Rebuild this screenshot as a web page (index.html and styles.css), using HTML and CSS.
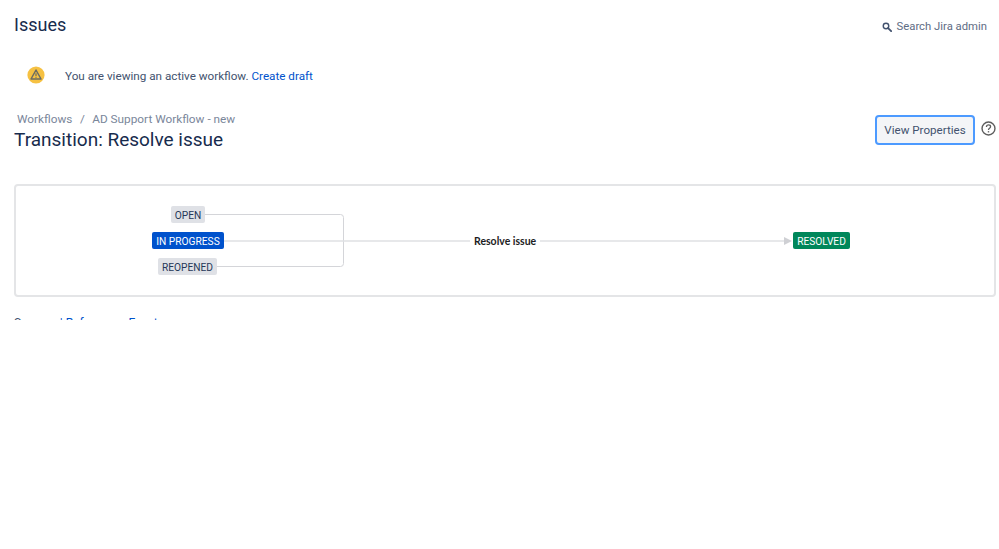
FILE: index.html
```html
<!DOCTYPE html>
<html lang="en">
<head>
<meta charset="utf-8">
<title>Transition: Resolve issue</title>
<link rel="stylesheet" href="styles.css">
</head>
<body>
<main class="page">
  <header class="topbar">
    <h1 class="product">Issues</h1>
    <a class="admin-search">
      <svg class="search-icon" viewBox="0 0 12 12" width="10" height="10"><circle cx="4.8" cy="4.8" r="3.3" fill="none" stroke="#42526e" stroke-width="1.7"/><path d="M7.3 7.3 11 11" stroke="#42526e" stroke-width="2.2" stroke-linecap="round"/></svg>
      Search Jira admin
    </a>
  </header>
  <div class="notice">
    <svg class="notice-icon" viewBox="0 0 18 18" width="18" height="18"><circle cx="9" cy="9" r="8.6" fill="#f6c142"/><path d="M9 4 14 13H4Z" fill="none" stroke="#6b6b62" stroke-width="1.5" stroke-linejoin="round"/><path d="M9 7.2v3M9 11.2v.9" stroke="#6b6b62" stroke-width="1.2"/></svg>
    <p class="notice-text">You are viewing an active workflow. <a class="link">Create draft</a></p>
  </div>
  <section class="title-row">
    <div class="title-block">
      <nav class="crumbs"><a>Workflows</a><span class="sep">/</span><a>AD Support Workflow - new</a></nav>
      <h2 class="title">Transition: Resolve issue</h2>
    </div>
    <div class="actions">
      <button class="btn">View Properties</button>
      <svg class="help" viewBox="0 0 16 16" width="15" height="15"><circle cx="8" cy="8" r="6.9" fill="none" stroke="#5e5e5e" stroke-width="1.5"/><path d="M5.8 6.3C5.8 5 6.8 4.2 8 4.2s2.2.8 2.2 1.9c0 1.7-2.2 1.7-2.2 3.4" fill="none" stroke="#5e5e5e" stroke-width="1.4"/><path d="M8 10.8v1.4" stroke="#5e5e5e" stroke-width="1.5"/></svg>
    </div>
  </section>
  <section class="diagram">
    <svg class="wires" width="980" height="111" viewBox="0 0 980 111">
      <path d="M190 29.500H325.500a3 3 0 0 1 3 3V78.500a3 3 0 0 1-3 3H202" fill="none" stroke="#d4d5d9" stroke-width="1"/>
      <path d="M209 56H771" stroke="#dfe0e3" stroke-width="1.500" fill="none"/>
      <path d="M769 52 777 56 769 60Z" fill="#cfd0d4"/>
    </svg>
    <span class="status status-grey node-open">OPEN</span>
    <span class="status status-blue node-progress">IN PROGRESS</span>
    <span class="status status-grey node-reopened">REOPENED</span>
    <span class="edge-label">Resolve issue</span>
    <span class="status status-green node-resolved">RESOLVED</span>
  </section>
  <div class="clipped">
    <div class="tabs"><a class="tab-current">Screen</a><a class="link">| Reference</a><a class="link">Event</a></div>
  </div>
</main>
</body>
</html>
```
FILE: styles.css
```css
* { box-sizing: border-box; }
html, body { margin: 0; background: #fff; }
body { font-family: Roboto, "Noto Sans", "Liberation Sans", sans-serif; color: #172b4d; }
.page { padding: 0 3px 0 14px; height: 549px; overflow: hidden; }
.topbar { display: flex; justify-content: space-between; align-items: center; height: 50px; padding-right: 9px; }
.product { margin: 0; font-size: 18px; font-weight: 400; color: #172b4d; line-height: 26px; }
.admin-search { display: flex; align-items: center; gap: 5px; font-size: 11.300px; color: #5e6c84; padding-top: 3px; }
.notice { display: flex; align-items: center; height: 52px; padding-left: 13px; gap: 20px; }
.notice-icon { flex: none; margin-top: -2px; }
.notice-text { margin: 0; font-size: 11.700px; color: #42526e; }
.link { color: #0052cc; }
.title-row { display: flex; justify-content: space-between; align-items: flex-start; height: 82px; padding-top: 9px; }
.crumbs { font-size: 11.800px; line-height: 16px; color: #7a869a; padding-left: 3px; }
.sep { margin: 0 7.500px; }
.title { margin: 0; font-size: 19px; font-weight: 400; line-height: 26px; color: #172b4d; }
.actions { display: flex; align-items: flex-start; gap: 6px; padding-top: 4px; }
.btn { width: 100px; height: 30px; border: 2px solid #4c9aff; border-radius: 4px; background: #f4f5f7; color: #42526e; font: 11.600px Roboto, sans-serif; padding: 0; }
.help { margin-top: 6px; }
.diagram { position: relative; width: 982px; height: 113px; border: 2px solid #e4e5e7; border-radius: 4px; }
.wires { position: absolute; left: -1px; top: -1px; }
.status { position: absolute; height: 17px; line-height: 19px; border-radius: 2px; font-size: 10.200px; white-space: nowrap; text-align: center; }
.status-grey { background: #dfe1e6; color: #253858; }
.status-blue { background: #0052cc; color: #fff; }
.status-green { background: #00875a; color: #fff; }
.node-open { left: 155px; top: 20px; width: 34px; }
.node-progress { left: 136px; top: 46px; width: 72px; }
.node-reopened { left: 142px; top: 72px; width: 59px; }
.node-resolved { left: 777px; top: 46px; width: 57px; }
.edge-label { position: absolute; left: 454px; top: 46px; height: 17px; line-height: 18px; padding: 0 4px; font-family: Lato, sans-serif; font-size: 10.500px; font-weight: 700; color: #1d1d22; background: #fff; white-space: nowrap; }
.clipped { height: 12px; margin-top: 11px; overflow: hidden; }
.tabs { display: flex; gap: 9px; font-size: 12px; line-height: 16px; color: #42526e; padding-top: 7px; }
```
